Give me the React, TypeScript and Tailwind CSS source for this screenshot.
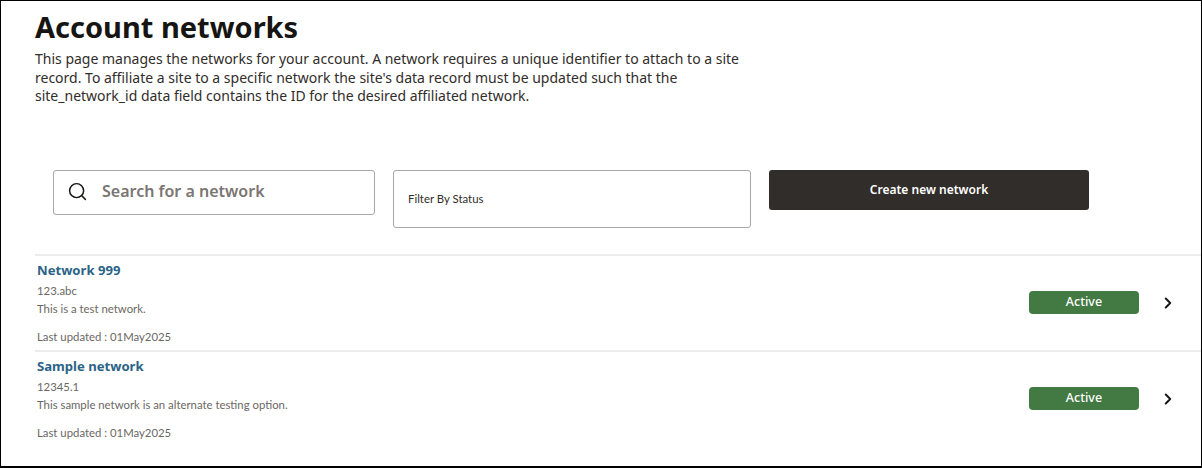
import { ChevronRight, Search } from "lucide-react";

const networks = [
  {
    name: "Network 999",
    id: "123.abc",
    description: "This is a test network.",
    updated: "01May2025",
  },
  {
    name: "Sample network",
    id: "12345.1",
    description: "This sample network is an alternate testing option.",
    updated: "01May2025",
  },
];

export default function App() {
  return (
    <div className="h-[468px] w-[1202px] overflow-hidden border border-b-2 border-black bg-white font-['Noto_Sans',sans-serif] text-[#312d2a]">
      <div className="pl-[34px] pt-[8px]">
        <h1 className="text-[29px] font-bold leading-[36px] text-[#161513]">Account networks</h1>
        <p className="mt-[5px] w-[740px] text-[14px] leading-[18.5px]">
          This page manages the networks for your account. A network requires a unique identifier to attach to a site
          record. To affiliate a site to a specific network the site's data record must be updated such that the
          site_network_id data field contains the ID for the desired affiliated network.
        </p>
      </div>

      <div className="mt-[64px] flex items-start pl-[52px]">
        <div className="flex h-[45px] w-[322px] items-center rounded-[3px] border border-[#a9a7a5] pb-[2px] pl-[13px]">
          <Search className="h-[21px] w-[21px] text-[#161513]" strokeWidth={1.7} />
          <span className="ml-[14px] text-[16px] font-semibold text-[#7a7673]">Search for a network</span>
        </div>
        <div className="ml-[18px] flex h-[58px] w-[358px] items-center rounded-[3px] border border-[#a9a7a5] pl-[14px] font-['Lato',sans-serif] text-[11.4px]">
          Filter By Status
        </div>
        <button className="ml-[18px] h-[40px] w-[320px] rounded-[3px] bg-[#312d2a] pt-[1px] text-[12px] font-semibold text-white">
          Create new network
        </button>
      </div>

      <ul className="ml-[34px] mt-[26px]">
        {networks.map((network) => (
          <li key={network.name} className="flex h-[96px] items-center border-t-2 border-[#ececec]">
            <div className="flex-1 self-start pt-[4px] pl-[2px] font-['Lato',sans-serif] text-[11.35px] text-[#6b6764]">
              <div className="font-['Noto_Sans',sans-serif] text-[13.1px] font-bold leading-[20px] text-[#2b6386]">{network.name}</div>
              <div className="mt-[2px] leading-[18px]">{network.id}</div>
              <div className="leading-[18px]">{network.description}</div>
              <div className="mt-[10px] leading-[18px]">Last updated : {network.updated}</div>
            </div>
            <div className="flex h-[23px] w-[110px] items-center justify-center rounded-[4px] bg-[#437a43] text-[12.5px] font-medium text-white">
              Active
            </div>
            <ChevronRight className="ml-[20px] mr-[24px] h-[18px] w-[18px] text-[#161513]" strokeWidth={2.5} />
          </li>
        ))}
      </ul>
    </div>
  );
}
